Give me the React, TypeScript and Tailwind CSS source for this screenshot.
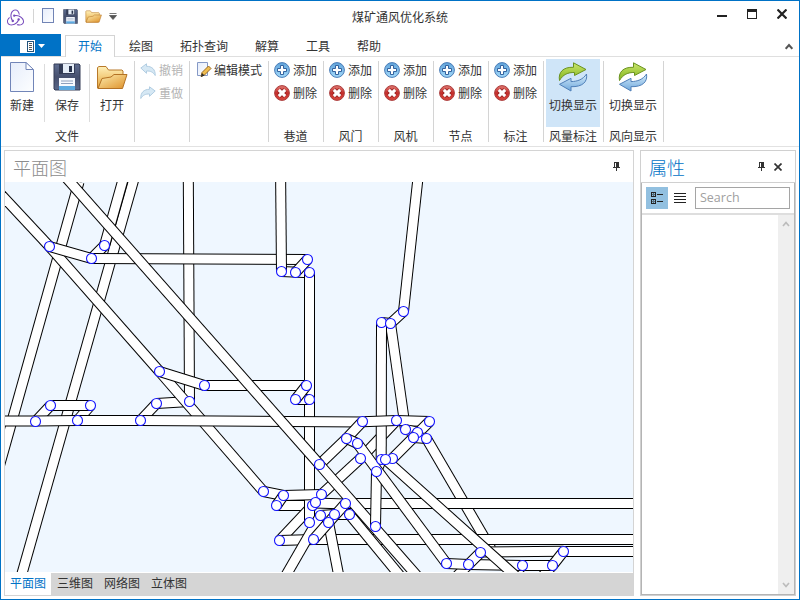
import React from "react";

type Pt = [number, number];
type Pipe = [number, number, number, number];

// Tunnels, listed from the bottom of the stack to the top.
const pipes: Pipe[] = [
  [79, 182, -20, 535],
  [134.8, 176, 21.3, 576],
  [124, 176, 104.5, 245.5],
  [188.3, 176, 189.5, 401.5],
  [-5, 188, 49.5, 246.5],
  [49.5, 246.5, 159.5, 371.5],
  [156.5, 403.5, 189.5, 401.5],
  [159.5, 371.5, 263.5, 491.5],
  [104.5, 245.5, 91.5, 258.5],
  [49.5, 246.5, 91.5, 258.5],
  [91.5, 258.5, 307.5, 259.5],
  [281.5, 271.5, 309.5, 272.8],
  [280.6, 176, 281.5, 271.5],
  [307.5, 259.5, 295.5, 272.5],
  [276.5, 505.5, 312.5, 505.5],
  [312.5, 505.5, 279.5, 540.5],
  [309.5, 272.5, 309.5, 399.5],
  [309.5, 399.5, 309.5, 522.5],
  [159.5, 371.5, 204.5, 385.5],
  [204.5, 385.5, 306.5, 385.5],
  [295.5, 399.5, 309.5, 399.5],
  [306.5, 385.5, 295.5, 399.5],
  [418.2, 176, 403.5, 311.5],
  [381.5, 322.5, 390.5, 323.5],
  [403.5, 311.5, 390.5, 323.5],
  [390.5, 323.5, 405.5, 429.5],
  [396.5, 420.5, 360.5, 458.5],
  [381.5, 322.5, 381.2, 459.5],
  [50.5, 405.5, 35.5, 421.5],
  [90.5, 405.5, 77.5, 420.5],
  [50.5, 405.5, 90.5, 405.5],
  [156.5, 403.5, 140.5, 420.5],
  [-5, 421, 35.5, 421],
  [35.5, 421, 77.5, 420.5],
  [77.5, 420.5, 140.5, 420.5],
  [140.5, 420.5, 362.5, 422],
  [362.5, 421.8, 396.5, 420.5],
  [396.5, 420.5, 429.5, 421.5],
  [362.5, 421.5, 346.5, 438.5],
  [346.5, 438.5, 319.5, 464.5],
  [346.5, 438.5, 357.5, 443.5],
  [360.5, 458.5, 321.5, 494.5],
  [405.5, 429.5, 418, 432.5],
  [429.5, 421.5, 413.5, 437.5],
  [413.5, 437.5, 426.5, 438.5],
  [413.5, 437.5, 392.5, 458.5],
  [426.5, 438.5, 491, 549],
  [263.5, 491.5, 283.5, 495.5],
  [283.5, 495.5, 276.5, 505.5],
  [283.5, 495.5, 321.5, 494.5],
  [279.5, 540.5, 313.5, 539.5],
  [315.5, 503, 345.5, 504],
  [345.5, 503.5, 640, 503.5],
  [313.5, 539.5, 640, 539.5],
  [328.5, 522.5, 339, 577],
  [349.5, 514.5, 401, 577],
  [319.5, 464.5, 418, 577],
  [320.5, 515.5, 285, 577],
  [328.5, 522.5, 313.5, 539.5],
  [320.5, 515.5, 334.5, 514.5],
  [334.5, 514.5, 349.5, 514.5],
  [345.5, 503.5, 328.5, 522.5],
  [381.5, 459.5, 376.5, 471.5],
  [376.5, 471.5, 375.5, 526.5],
  [61.2, 172, 319.5, 464.5],
  [357.5, 443.5, 446.5, 563.5],
  [468.5, 564.5, 455, 578],
  [480.5, 552, 563.5, 551.3],
  [563.5, 551.5, 640, 551.5],
  [522.5, 565.5, 508, 580],
  [552.5, 565.5, 540, 579],
  [446.5, 563.5, 468.5, 564.5],
  [468.5, 564.5, 522.5, 565.5],
  [522.5, 565.5, 552.5, 565.5],
  [563.5, 551.5, 552.5, 565.5],
  [480.5, 552.5, 468.5, 564.5],
  [385.5, 459.5, 516.7, 577],
];

const nodes: Pt[] = [
  [49.5, 246.5], [91.5, 258.5], [104.5, 245.5], [307.5, 259.5], [281.5, 271.5],
  [295.5, 272.5], [309.5, 272.5], [403.5, 311.5], [381.5, 322.5], [390.5, 323.5],
  [50.5, 405.5], [35.5, 421.5], [90.5, 405.5], [77.5, 420.5], [156.5, 403.5],
  [140.5, 420.5], [159.5, 371.5], [204.5, 385.5], [189.5, 401.5], [306.5, 385.5],
  [295.5, 399.5], [309.5, 399.5], [362.5, 421.5], [346.5, 438.5], [357.5, 443.5],
  [360.5, 458.5], [319.5, 464.5], [396.5, 420.5], [429.5, 421.5], [405.5, 429.5],
  [417.5, 432.5], [413.5, 437.5], [426.5, 438.5], [381.5, 459.5], [392.5, 458.5],
  [385.5, 459.5], [376.5, 471.5], [263.5, 491.5], [283.5, 495.5], [276.5, 505.5],
  [321.5, 494.5], [312.5, 505.5], [315.5, 502.5], [345.5, 503.5], [320.5, 515.5],
  [349.5, 514.5], [334.5, 514.5], [328.5, 522.5], [309.5, 522.5], [279.5, 540.5],
  [313.5, 539.5], [375.5, 526.5], [446.5, 563.5], [480.5, 552.5], [468.5, 564.5],
  [522.5, 565.5], [563.5, 551.5], [552.5, 565.5],
];

function MineMap() {
  return (
    <svg width="628" height="390" viewBox="5 182 628 390" className="block shrink-0 bg-[#eff7ff]">
      {pipes.map(([x1, y1, x2, y2], i) => (
        <g key={i}>
          <line x1={x1} y1={y1} x2={x2} y2={y2} stroke="#000" strokeWidth="11" />
          <line x1={x1} y1={y1} x2={x2} y2={y2} stroke="#fff" strokeWidth="9" />
        </g>
      ))}
      {nodes.map(([x, y], i) => (
        <circle key={i} cx={x} cy={y} r="5" fill="#fff" stroke="#1414ff" strokeWidth="1.1" />
      ))}
    </svg>
  );
}

function Gradients() {
  return (
    <svg width="0" height="0" className="absolute">
      <defs>
        <linearGradient id="page" x1="0" y1="0" x2="1" y2="1">
          <stop offset="0" stopColor="#e6edfb" />
          <stop offset="1" stopColor="#fdfeff" />
        </linearGradient>
        <linearGradient id="disk" x1="0" y1="0" x2="0" y2="1">
          <stop offset="0" stopColor="#5e6c90" />
          <stop offset="0.5" stopColor="#46506e" />
          <stop offset="1" stopColor="#5a6788" />
        </linearGradient>
        <linearGradient id="folder" x1="0" y1="0" x2="1" y2="1">
          <stop offset="0" stopColor="#fdeeb0" />
          <stop offset="1" stopColor="#de9028" />
        </linearGradient>
        <linearGradient id="back" x1="0" y1="0" x2="0" y2="1">
          <stop offset="0" stopColor="#fff0b8" />
          <stop offset="1" stopColor="#e6a63c" />
        </linearGradient>
        <linearGradient id="blue" x1="0" y1="0" x2="0" y2="1">
          <stop offset="0" stopColor="#5fa3da" />
          <stop offset="1" stopColor="#a4dafa" />
        </linearGradient>
        <linearGradient id="red" x1="0" y1="0" x2="0" y2="1">
          <stop offset="0" stopColor="#e27b74" />
          <stop offset="0.5" stopColor="#c42d2a" />
          <stop offset="1" stopColor="#d94a40" />
        </linearGradient>
        <linearGradient id="green" x1="0" y1="0" x2="0" y2="1">
          <stop offset="0" stopColor="#c9e56c" />
          <stop offset="1" stopColor="#83b51d" />
        </linearGradient>
        <linearGradient id="sky" x1="0" y1="0" x2="0" y2="1">
          <stop offset="0" stopColor="#d5ebfa" />
          <stop offset="1" stopColor="#6fa8dc" />
        </linearGradient>
      </defs>
    </svg>
  );
}

function LogoIcon() {
  return (
    <svg width="17" height="17" viewBox="0 0 24 24" fill="#764abc">
      <path d="M16.634 16.504c.87-.075 1.543-.84 1.5-1.754-.047-.914-.796-1.648-1.709-1.648h-.061a1.71 1.71 0 00-1.648 1.769c.03.479.226.869.494 1.153-1.048 2.038-2.621 3.535-5.005 4.795-1.603.838-3.296 1.154-4.944.929-1.378-.194-2.456-.810-3.116-1.799-.988-1.499-1.078-3.116-.255-4.734.601-1.166 1.499-2.023 2.099-2.443a9.96 9.96 0 01-.42-1.543C-.868 14.408-.416 18.752.932 20.805c1.004 1.498 3.057 2.456 5.304 2.456.6 0 1.229-.044 1.843-.194 3.897-.749 6.848-3.086 8.541-6.532zm5.348-3.746c-2.320-2.728-5.738-4.226-9.634-4.226h-.51c-.253-.554-.837-.899-1.498-.899h-.045c-.943 0-1.678.810-1.647 1.753.03.898.794 1.648 1.708 1.648h.074a1.69 1.69 0 001.499-1.049h.555c2.309 0 4.495.674 6.488 1.992 1.527 1.005 2.622 2.323 3.237 3.896.538 1.288.509 2.547-.045 3.597-.855 1.647-2.294 2.517-4.196 2.517-1.199 0-2.367-.375-2.967-.644-.36.298-.96.793-1.394 1.093 1.318.598 2.652.943 3.940.943 2.922 0 5.094-1.647 5.919-3.236.898-1.798.824-4.824-1.470-7.416zM6.490 17.042c.030.899.793 1.648 1.708 1.648h.060a1.688 1.688 0 001.648-1.768c0-.900-.779-1.647-1.693-1.647h-.060c-.060 0-.149 0-.226.029-1.243-2.098-1.768-4.346-1.572-6.772.119-1.828.719-3.417 1.797-4.735.899-1.124 2.593-1.680 3.747-1.708 3.236-.061 4.585 3.971 4.689 5.574l1.498.450C17.741 3.197 14.686.620 11.764.620 9.022.620 6.490 2.613 5.470 5.535 4.077 9.430 4.991 13.177 6.700 16.174c-.150.195-.240.539-.210.868z" />
    </svg>
  );
}

function PageIcon({ small = false }: { small?: boolean }) {
  return small ? (
    <svg width="14" height="16" viewBox="0 0 14 16">
      <rect x="1.5" y="0.5" width="11" height="14" fill="url(#page)" stroke="#7184b5" />
    </svg>
  ) : (
    <svg width="26" height="32" viewBox="0 0 26 32">
      <path d="M1.5 1.5H17L24.500 9V30.500H1.500Z" fill="url(#page)" stroke="#7185b8" />
      <path d="M17 1.500V8.500H24.500Z" fill="#fff" stroke="#7185b8" />
    </svg>
  );
}

function DiskIcon({ size }: { size: number }) {
  return (
    <svg width={size} height={size} viewBox="0 0 28 28">
      <path d="M1 1H26L27 2V27H2L1 26Z" fill="url(#disk)" stroke="#343d57" />
      <rect x="6" y="1" width="16" height="10" fill="#333c56" />
      <rect x="10" y="1" width="11" height="9" fill="#e5edf7" />
      <rect x="16" y="3" width="3" height="6" fill="#26304a" />
      <rect x="6" y="15" width="16" height="12" fill="#f6f9fe" />
      <rect x="6" y="23" width="16" height="4" fill="#5da9e0" />
      <path d="M8 18H20M8 20.500H20" stroke="#8ea0bd" />
    </svg>
  );
}

function FolderIcon({ w, h }: { w: number; h: number }) {
  return (
    <svg width={w} height={h} viewBox="0 0 32 25" preserveAspectRatio="none">
      <path d="M1.500 23V2.500L3 1.500H10L12.500 5H26L27 6V12L24 23.500H2Z" fill="url(#back)" stroke="#b8792a" />
      <path d="M2 23.500L6 13.500L15 12L18 9.500H31L26.500 23.500Z" fill="url(#folder)" stroke="#b47224" />
    </svg>
  );
}

function AddIcon() {
  return (
    <svg width="16" height="16" viewBox="0 0 16 16">
      <circle cx="8" cy="8" r="7.400" fill="url(#blue)" stroke="#4b7db8" strokeWidth="1" />
      <path d="M6.500 3.500H9.500V6.500H12.500V9.500H9.500V12.500H6.500V9.500H3.500V6.500H6.500Z" fill="#fff" stroke="#34639f" />
    </svg>
  );
}

function RemoveIcon() {
  return (
    <svg width="16" height="16" viewBox="0 0 16 16">
      <circle cx="8" cy="8" r="7.400" fill="url(#red)" stroke="#aa3e3e" strokeWidth="1" />
      <path d="M4.800 4.800L11.200 11.200M11.200 4.800L4.800 11.200" stroke="#8f1d1d" strokeWidth="4.600" />
      <path d="M4.800 4.800L11.200 11.200M11.200 4.800L4.800 11.200" stroke="#fff" strokeWidth="3.100" />
    </svg>
  );
}

function UndoIcon({ flip = false }: { flip?: boolean }) {
  return (
    <svg width="16" height="14" viewBox="0 0 16 14" className={flip ? "-scale-x-100" : ""}>
      <path d="M0.800 5L6.500 0.800V3.300C12 3.300 15.500 6.500 15.200 12.500C13 9 10.500 7.800 6.500 8V10.300Z" fill="#d6e8f4" stroke="#b1cde2" />
    </svg>
  );
}

function EditIcon() {
  return (
    <svg width="16" height="17" viewBox="0 0 16 17">
      <path d="M1.500 1.500H11.500V14.500H1.500Z" fill="url(#page)" stroke="#8599c6" />
      <path d="M5 15.500L6 11.500L12.500 5L15 7.500L8.500 14Z" fill="#f0bd4f" stroke="#9a6a22" />
      <path d="M5 16L6 12L8.500 14.500Z" fill="#2d2d2d" />
    </svg>
  );
}

function SwapIcon() {
  return (
    <svg width="32" height="32" viewBox="0 0 32 32">
      <path d="M2.500 19.500C1 11.500 6 5.800 16.500 6.300V1.800L29 8.500L17.500 14.500V11.500C11 11.300 6 13.500 2.500 19.500Z" fill="url(#green)" stroke="#6a9220" />
      <path d="M29.500 13C30.800 21 25.500 26 14 25.700V30L2.500 23.300L14 17.300V20.600C20.500 20.500 26 18.500 29.500 13Z" fill="url(#sky)" stroke="#4f7fb8" />
    </svg>
  );
}

function Pin() {
  return (
    <svg width="9" height="10" viewBox="0 0 9 10" shapeRendering="crispEdges">
      <path d="M2 0H7V5H8V6H5V9H4V6H1V5H2ZM3 1V5H4V1Z" fill="#333" fillRule="evenodd" />
    </svg>
  );
}

function BigButton({ icon, label, className }: { icon: React.ReactNode; label: string; className: string }) {
  return (
    <div className={`flex shrink-0 flex-col items-center ${className}`}>
      <div className="-mt-px flex h-[38px] items-center justify-center">{icon}</div>
      <span className="mt-[1px] leading-4">{label}</span>
    </div>
  );
}

function Group({ label, className, children }: { label?: string; className: string; children: React.ReactNode }) {
  return (
    <div className={`relative flex h-[89px] shrink-0 flex-col justify-between ${className}`}>
      {children}
      {label && <div className="pr-[2px] pb-[2px] text-center leading-4">{label}</div>}
      <div className="absolute top-[4px] right-0 h-[81px] w-px bg-[#d4d4d4]" />
    </div>
  );
}

const editGroups = ["巷道", "风门", "风机", "节点", "标注"];
const tabs = ["绘图", "拓扑查询", "解算", "工具", "帮助"];

export default function App() {
  return (
    <div className="flex h-[600px] w-[800px] flex-col overflow-hidden border border-[#0072c6] bg-white font-['Noto_Sans_CJK_SC',sans-serif] text-[12px] whitespace-nowrap text-[#333]">
      <Gradients />
      <header className="flex h-[33px] shrink-0 items-start">
        <div className="flex w-[351px] items-start pt-[7px] pl-[6px]">
          <div className="pt-[1px]"><LogoIcon /></div>
          <div className="mt-[1px] ml-[9px] h-[14px] w-px bg-[#d4d4d4]" />
          <div className="ml-[7px]"><PageIcon small /></div>
          <div className="ml-[8px] pt-px"><DiskIcon size={15} /></div>
          <div className="ml-[7px] pt-[2px]"><FolderIcon w={17} h={13} /></div>
          <svg width="8" height="7" viewBox="0 0 8 7" className="mt-[5px] ml-[7px]">
            <path d="M0.500 0.500H7.500M0.500 2.500H7.500L4 6.500Z" fill="#555" stroke="#555" strokeWidth="0.800" />
          </svg>
        </div>
        <div className="pt-[8px] leading-4">煤矿通风优化系统</div>
        <div className="ml-auto flex items-start pt-[8px] pr-[12px]">
          <div className="mt-[6px] h-[2px] w-[10px] bg-[#222]" />
          <div className="ml-[20px] h-[10px] w-[10px] border border-t-[3px] border-[#222]" />
          <svg width="10" height="10" viewBox="0 0 10 10" className="ml-[20px]">
            <path d="M0.500 0.500L9.500 9.500M9.500 0.500L0.500 9.500" stroke="#222" strokeWidth="2.200" />
          </svg>
        </div>
      </header>

      <nav className="flex h-[23px] shrink-0 items-start border-b border-[#dfdfdf]">
        <div className="flex h-[22px] w-[60px] items-center justify-center gap-[3px] bg-[#0072c6] pt-[2px] pl-[2px]">
          <svg width="15" height="13" viewBox="0 0 15 13" shapeRendering="crispEdges">
            <path d="M0 0H15V13H0Z" fill="#fff" />
            <path d="M7.500 1V12M13.500 1V12M7 1.500H14M7 11.500H14" stroke="#23547c" />
            <path d="M9 3.500H12M9 5.500H12M9 7.500H12M9 9.500H12" stroke="#555" />
          </svg>
          <svg width="7" height="4" viewBox="0 0 7 4"><path d="M0 0H7L3.500 4Z" fill="#fff" /></svg>
        </div>
        <div className="ml-[4px] mt-[1px] h-[22px] w-[50px] border border-b-0 border-[#d4d4d4] bg-white pt-[2px] text-center leading-4 text-[#0072c6]">开始</div>
        <div className="flex gap-[27px] pt-[4px] pl-[14px] leading-4">
          {tabs.map((t) => <span key={t}>{t}</span>)}
        </div>
        <svg width="8" height="7" viewBox="0 0 8 7" className="mt-[9px] mr-[6px] ml-auto">
          <path d="M0.700 5.800L4 2L7.300 5.800" fill="none" stroke="#555" strokeWidth="2" />
        </svg>
      </nav>

      <section className="flex h-[90px] shrink-0 items-start border-b border-[#e2e2e2]">
        <Group className="w-[134px]" label="文件">
          <div className="flex pt-[2px]">
            <BigButton className="w-[42px]" icon={<PageIcon />} label="新建" />
            <div className="mt-[5px] ml-px h-[58px] w-px bg-[#dcdcdc]" />
            <BigButton className="w-[44px]" icon={<DiskIcon size={28} />} label="保存" />
            <div className="mt-[5px] h-[58px] w-px bg-[#dcdcdc]" />
            <BigButton className="w-[44px]" icon={<FolderIcon w={32} h={25} />} label="打开" />
          </div>
        </Group>
        <Group className="w-[55px]">
          <div className="flex flex-col gap-[7px] pt-[5px] pl-[5px] leading-4 text-[#b4b4b4]">
            <div className="flex items-center gap-[3px]"><UndoIcon /><span>撤销</span></div>
            <div className="flex items-center gap-[3px]"><UndoIcon flip /><span>重做</span></div>
          </div>
        </Group>
        <Group className="w-[79px]">
          <div className="flex items-center gap-[2px] pt-[4px] pl-[6px] leading-4"><EditIcon /><span>编辑模式</span></div>
        </Group>
        {editGroups.map((g) => (
          <Group key={g} className="w-[55px]" label={g}>
            <div className="flex flex-col gap-[7px] pt-[5px] pl-[5px] leading-4">
              <div className="flex items-center gap-[3px]"><AddIcon /><span>添加</span></div>
              <div className="flex items-center gap-[3px]"><RemoveIcon /><span>删除</span></div>
            </div>
          </Group>
        ))}
        <Group className="w-[60px]" label="风量标注">
          <BigButton className="mt-[2px] ml-[2px] h-[68px] w-[54px] bg-[#cfe5f8]" icon={<SwapIcon />} label="切换显示" />
        </Group>
        <Group className="w-[60px]" label="风向显示">
          <BigButton className="mt-[2px] ml-[2px] h-[68px] w-[54px]" icon={<SwapIcon />} label="切换显示" />
        </Group>
      </section>

      <main className="flex min-h-0 flex-1 gap-[6px] pt-[3px] pr-[3px] pb-[3px] pl-[3px]">
        <section className="flex w-[630px] shrink-0 flex-col border border-[#d4d4d4]">
          <div className="flex h-[31px] shrink-0 items-center justify-between pr-[12px] pl-[8px]">
            <span className="text-[18px] leading-[22px] font-light text-[#8c8c8c]">平面图</span>
            <Pin />
          </div>
          <MineMap />
          <div className="flex min-h-0 flex-1 border-t border-white bg-[#d5d5d5]">
            <div className="w-[46px] bg-white pt-[2px] text-center leading-4 text-[#0072c6]">平面图</div>
            <div className="flex gap-[11px] pt-[2px] pl-[6px] leading-4">
              <span>三维图</span><span>网络图</span><span>立体图</span>
            </div>
          </div>
        </section>

        <section className="flex w-[156px] flex-col border border-[#d0d0d0]">
          <div className="flex h-[32px] shrink-0 items-center border-b border-[#d0d0d0] pr-[13px] pl-[8px]">
            <span className="text-[18px] leading-[22px] font-light text-[#0072c6]">属性</span>
            <div className="ml-auto"><Pin /></div>
            <svg width="8" height="8" viewBox="0 0 8 8" className="ml-[8px]">
              <path d="M0.500 0.500L7.500 7.500M7.500 0.500L0.500 7.500" stroke="#333" strokeWidth="1.700" />
            </svg>
          </div>
          <div className="flex min-h-0 flex-1 flex-col border border-t-0 border-[#b4b4b4]">
            <div className="flex h-[32px] shrink-0 items-center border-b-2 border-[#dedede] pl-[4px]">
              <div className="flex h-[22px] w-[22px] items-center justify-center bg-[#92c0e0]">
                <svg width="12" height="12" viewBox="0 0 12 12" shapeRendering="crispEdges" fill="none" stroke="#222">
                  <path d="M0.500 0.500H4.500V4.500H0.500ZM0.500 7.500H4.500V11.500H0.500ZM6 2.500H12M6 9.500H12" />
                  <path d="M1 2.500H4M1 9.500H4M2.500 1V4M2.500 8V11" strokeOpacity="0.550" />
                </svg>
              </div>
              <svg width="12" height="12" viewBox="0 0 12 12" shapeRendering="crispEdges" className="ml-[6px]">
                <path d="M0 1.500H12M0 4.500H12M0 7.500H12M0 10.500H12" stroke="#222" />
              </svg>
              <div className="ml-[9px] flex h-[22px] w-[95px] items-center border border-[#a5a5a5] pl-[4px] font-['Open_Sans',sans-serif] text-[12.5px] text-[#a0a0a0]">Search</div>
            </div>
            <div className="flex min-h-0 flex-1 justify-end">
              <div className="flex w-[16px] flex-col items-center justify-between bg-[#efefef] pt-[6px] pb-[6px]">
                <svg width="8" height="6" viewBox="0 0 8 6"><path d="M1 5L4 1.500L7 5" fill="none" stroke="#bcbcbc" strokeWidth="1.700" /></svg>
                <svg width="8" height="6" viewBox="0 0 8 6"><path d="M1 1L4 4.500L7 1" fill="none" stroke="#bcbcbc" strokeWidth="1.700" /></svg>
              </div>
            </div>
          </div>
        </section>
      </main>
    </div>
  );
}
